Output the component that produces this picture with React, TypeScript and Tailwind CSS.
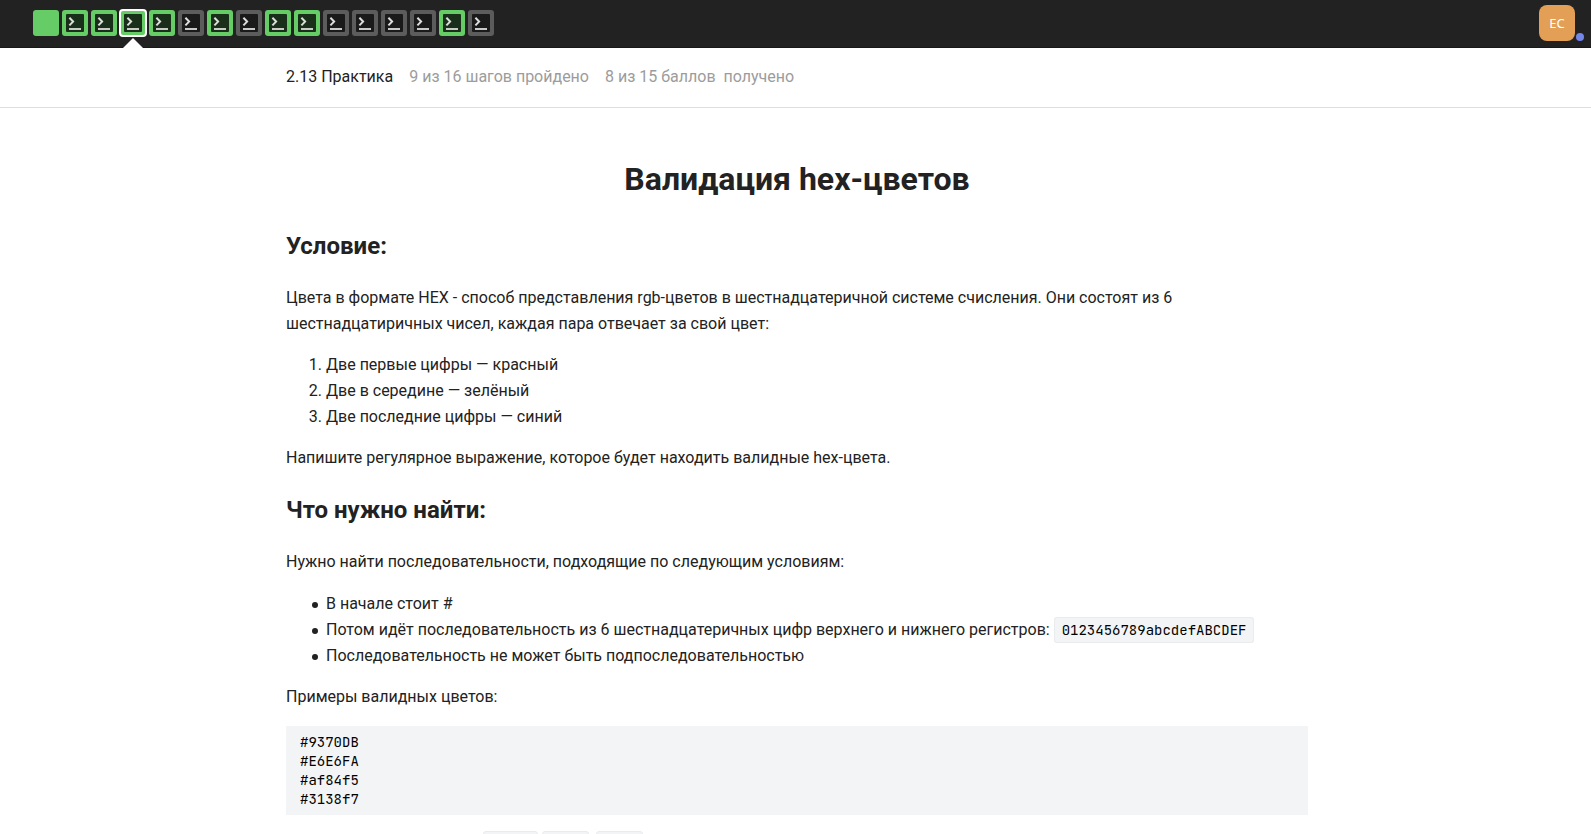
import React from "react";

type Step = { solved: boolean; theory?: boolean; current?: boolean };

const steps: Step[] = [
  { solved: true, theory: true },
  { solved: true },
  { solved: true },
  { solved: true, current: true },
  { solved: true },
  { solved: false },
  { solved: true },
  { solved: false },
  { solved: true },
  { solved: true },
  { solved: false },
  { solved: false },
  { solved: false },
  { solved: false },
  { solved: true },
  { solved: false },
];

function StepIcon({ solved }: { solved: boolean }) {
  return (
    <svg viewBox="0 0 18 18" className="size-[18px]" aria-hidden="true">
      <rect width="18" height="18" rx="1" fill={solved ? "#1a2f19" : "#1a1a1a"} />
      <path d="M3.4 3.8 L7.1 7.6 L3.4 11.4" fill="none" stroke="#dedede" strokeWidth="2" />
      <path d="M3 15 H15" stroke="#dedede" strokeWidth="1.8" />
    </svg>
  );
}

function StepLink({ step, index }: { step: Step; index: number }) {
  return (
    <a
      href={"#step-" + (index + 1)}
      aria-label={"Шаг " + (index + 1)}
      aria-current={step.current ? "step" : undefined}
      className={
        "relative flex size-[26px] items-center justify-center rounded-[3px] " +
        (step.solved ? "bg-[#66cc66]" : "bg-[#5c5c5c]") +
        (step.current ? " outline-2 -outline-offset-1 outline-white" : "")
      }
    >
      {!step.theory && <StepIcon solved={step.solved} />}
      {step.current && (
        <svg viewBox="0 0 20 10" className="absolute top-7 left-[3px] h-[10px] w-5" aria-hidden="true">
          <path d="M0 10 L10 0 L20 10 Z" fill="#fff" />
        </svg>
      )}
    </a>
  );
}

function Code({ children }: { children: React.ReactNode }) {
  return (
    <code className="rounded-[3px] border border-[#e9ebed] bg-[#f3f4f6] px-[7px] py-[3px] font-['JetBrains_Mono','DejaVu_Sans_Mono',monospace] text-sm text-black">
      {children}
    </code>
  );
}

function Bullet({ children }: { children: React.ReactNode }) {
  return (
    <li className="before:mr-2 before:-ml-[14px] before:inline-block before:size-[6px] before:rounded-full before:bg-current before:align-middle">
      {children}
    </li>
  );
}

export default function App() {
  return (
    <div className="h-screen overflow-hidden bg-white font-['Roboto',sans-serif] text-base leading-[26px] text-[#222]">
      <header className="flex h-12 items-center justify-between border-b border-[#1c151c] bg-[#222] pr-4 pb-px pl-[33px]">
        <nav aria-label="Шаги урока" className="flex gap-[3px]">
          {steps.map((step, i) => (
            <StepLink key={i} step={step} index={i} />
          ))}
        </nav>
        <button
          type="button"
          className="relative size-9 rounded-lg bg-[#e29f55] font-['Noto_Sans',sans-serif] text-[13px] text-white"
        >
          EC
          <span className="absolute -right-[9px] bottom-0 size-2 rounded-full bg-[#7486e8]" />
        </button>
      </header>

      <div className="h-[60px] border-b border-[#ddd]">
        <div className="mx-auto flex h-full max-w-[1025px] items-center gap-4 pb-[2px] pl-[3px] text-[#9c9c9c]">
          <span className="text-[#222]">2.13 Практика</span>
          <span>9 из 16 шагов пройдено</span>
          <span className="whitespace-pre">8 из 15 баллов  получено</span>
        </div>
      </div>

      <main className="mx-auto max-w-[1025px] pl-[3px]">
        <h1 className="mt-[50px] text-center text-[32px] leading-[42px] font-bold">Валидация hex-цветов</h1>
        <h2 className="mt-[30px] text-2xl leading-[32px] font-bold">Условие:</h2>
        <p className="mt-[23px] max-w-[900px]">
          Цвета в формате HEX - способ представления rgb-цветов в шестнадцатеричной системе счисления. Они состоят из 6
          шестнадцатиричных чисел, каждая пара отвечает за свой цвет:
        </p>
        <ol className="mt-[15px] list-decimal pl-10">
          <li>Две первые цифры — красный</li>
          <li>Две в середине — зелёный</li>
          <li>Две последние цифры — синий</li>
        </ol>
        <p className="mt-[15px]">Напишите регулярное выражение, которое будет находить валидные hex-цвета.</p>
        <h2 className="mt-[23px] text-2xl leading-[32px] font-bold">Что нужно найти:</h2>
        <p className="mt-[23px]">Нужно найти последовательности, подходящие по следующим условиям:</p>
        <ul className="mt-4 pl-10">
          <Bullet>В начале стоит #</Bullet>
          <Bullet>
            Потом идёт последовательность из 6 шестнадцатеричных цифр верхнего и нижнего регистров:{" "}
            <Code>0123456789abcdefABCDEF</Code>
          </Bullet>
          <Bullet>Последовательность не может быть подпоследовательностью</Bullet>
        </ul>
        <p className="mt-[15px]">Примеры валидных цветов:</p>
        <pre className="mt-4 bg-[#f3f4f6] px-[14px] pt-[7px] pb-[6px] font-['JetBrains_Mono','DejaVu_Sans_Mono',monospace] text-sm leading-[19px] text-black">
          {"#9370DB\n#E6E6FA\n#af84f5\n#3138f7"}
        </pre>
        <div className="mt-4 flex gap-1 pl-[197px]">
          <span className="h-6 w-[55px] rounded-[3px] border border-[#e9ebed] bg-[#f3f4f6]" />
          <span className="h-6 w-[47px] rounded-[3px] border border-[#e9ebed] bg-[#f3f4f6]" />
          <span className="ml-[3px] h-6 w-[47px] rounded-[3px] border border-[#e9ebed] bg-[#f3f4f6]" />
        </div>
      </main>
    </div>
  );
}
